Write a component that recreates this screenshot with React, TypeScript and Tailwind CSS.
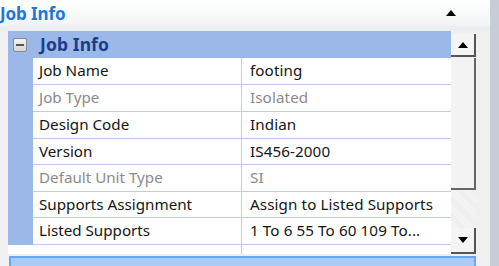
import React from "react";

const rows: { label: string; value: string; dim?: boolean }[] = [
  { label: "Job Name", value: "footing" },
  { label: "Job Type", value: "Isolated", dim: true },
  { label: "Design Code", value: "Indian" },
  { label: "Version", value: "IS456-2000" },
  { label: "Default Unit Type", value: "SI", dim: true },
  { label: "Supports Assignment", value: "Assign to Listed Supports" },
  { label: "Listed Supports", value: "1 To 6 55 To 60 109 To..." },
];
const heights = ["h-[27px]", "h-[27px]", "h-[27px]", "h-[26px]", "h-[27px]", "h-[26px]", "h-[27px]"];

function UpTri() {
  return (
    <svg width="10" height="6" viewBox="0 0 10 6">
      <path d="M0 6 L5 0 L10 6 Z" fill="#000" />
    </svg>
  );
}
function DownTri() {
  return (
    <svg width="10" height="6" viewBox="0 0 10 6">
      <path d="M0 0 L5 6 L10 0 Z" fill="#000" />
    </svg>
  );
}

export default function App() {
  return (
    <div
      className="w-[499px] h-[266px] bg-[#f0f0f0] flex overflow-hidden"
      style={{ fontFamily: '"Noto Sans", "Open Sans", sans-serif' }}
    >
      <div className="w-[490px] flex flex-col">
        {/* title bar */}
        <div className="h-[26px] flex items-center justify-between bg-gradient-to-b from-[#ffffff] to-[#f2f3f6] pr-[34px]">
          <span className="text-[17px] font-bold text-[#1b79d8] leading-none tracking-[-0.1px]">Job Info</span>
          <UpTri />
        </div>
        <div className="h-[5px] bg-[#eceef2]" />
        {/* panel */}
        <div className="ml-[8px] w-[468px] h-[223px] flex bg-white">
          <div className="w-[443px] flex flex-col">
            <div className="h-[27px] bg-[#9bb8e8] flex items-center">
              <div className="w-[14px] h-[14px] ml-[5px] border border-[#8a8a8a] rounded-[2px] bg-gradient-to-b from-[#f4f4f4] to-[#d6d6d6] flex items-center justify-center">
                <div className="w-[8px] h-[2px] bg-[#555]" />
              </div>
              <span className="ml-[13px] text-[17.5px] font-bold text-[#1d3c8c] leading-none tracking-[0.1px]">Job Info</span>
            </div>
            {rows.map((r, i) => (
              <div key={r.label} className={`${heights[i]} flex`}>
                <div className="w-[25px] bg-[#9bb8e8]" />
                <div className="flex-1 flex border-b border-[#b8cdf0]">
                  <div className="w-[209px] border-r border-[#b8cdf0] flex items-center pl-[6px]">
                    <span className={`text-[15.2px] leading-none whitespace-nowrap ${r.dim ? "text-[#8a8a8a]" : "text-[#151515]"}`}>{r.label}</span>
                  </div>
                  <div className="flex-1 flex items-center pl-[8px]">
                    <span className={`text-[15.2px] leading-none whitespace-nowrap tracking-[0.1px] ${r.dim ? "text-[#8a8a8a]" : "text-[#151515]"}`}>{r.value}</span>
                  </div>
                </div>
              </div>
            ))}
            <div className="flex-1 flex">
              <div className="w-[234px] border-r border-[#b8cdf0]" />
            </div>
          </div>
          {/* scrollbar */}
          <div className="w-[25px] bg-[#f0f0f0] flex flex-col pt-[3px]">
            <div className="h-[23px] bg-[#f4f4f4] border-r-2 border-b-2 border-[#555] flex items-center justify-center">
              <UpTri />
            </div>
            <div className="h-[132px] bg-[#f3f3f3] border-r-2 border-b-2 border-[#666] mt-[1px]" />
            <div className="flex-1 bg-[repeating-linear-gradient(45deg,#f6f6f6_0px,#f6f6f6_1px,#ececec_1px,#ececec_2px)]" />
            <div className="h-[26px] bg-[#f4f4f4] border-r-2 border-b-2 border-[#555] flex items-center justify-center">
              <DownTri />
            </div>
          </div>
        </div>
        <div className="h-[2px]" />
        <div className="ml-[9px] w-[467px] flex-1 bg-[#a9cdf6] border-t-2 border-l-2 border-r-2 border-[#6aa6ee]" />
      </div>
      <div className="w-[9px] bg-[#c7ccd6]" />
    </div>
  );
}
